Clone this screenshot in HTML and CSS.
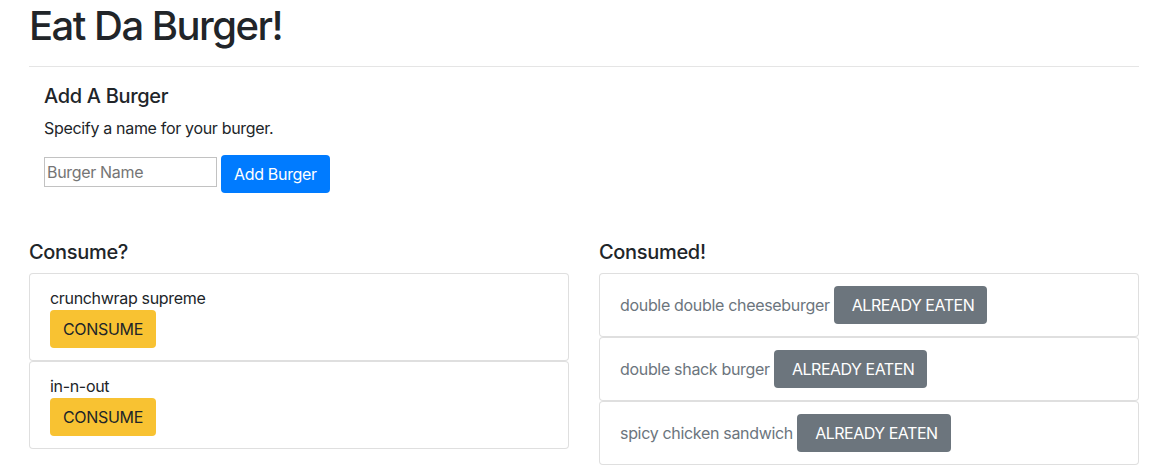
FILE: index.html
```html
<!DOCTYPE html>
<html lang="en">
<head>
<meta charset="utf-8">
<title>Eat Da Burger!</title>
<link rel="stylesheet" href="styles.css">
</head>
<body>
<div class="page">
  <h1 class="title">Eat Da Burger!</h1>
  <hr class="divider">
  <section class="add">
    <h2 class="add-title">Add A Burger</h2>
    <p class="add-text">Specify a name for your burger.</p>
    <form class="add-form">
      <input class="name-input" type="text" placeholder="Burger Name">
      <button class="btn btn-primary" type="button">Add Burger</button>
    </form>
  </section>
  <div class="columns">
    <div class="col">
      <h3 class="col-title">Consume?</h3>
      <div class="item item-stack">
        <div class="item-name">crunchwrap supreme</div>
        <button class="btn btn-warning" type="button">Consume</button>
      </div>
      <div class="item item-stack">
        <div class="item-name">in-n-out</div>
        <button class="btn btn-warning" type="button">Consume</button>
      </div>
    </div>
    <div class="col">
      <h3 class="col-title">Consumed!</h3>
      <div class="item item-inline">double double cheeseburger <button class="btn btn-secondary" type="button">Already eaten</button></div>
      <div class="item item-inline">double shack burger <button class="btn btn-secondary" type="button">Already eaten</button></div>
      <div class="item item-inline">spicy chicken sandwich <button class="btn btn-secondary" type="button">Already eaten</button></div>
    </div>
  </div>
</div>
</body>
</html>
```
FILE: styles.css
```css
* { box-sizing: border-box; }

body {
  margin: 0;
  font-family: "Inter", "Liberation Sans", sans-serif;
  font-size: 16px;
  line-height: 1.5;
  letter-spacing: -0.02em;
  color: #212529;
  background: #fff;
}

.page {
  width: 1110px;
  margin-left: 29px;
}

.title {
  margin: 0;
  padding-top: 2px;
  font-size: 40px;
  font-weight: 500;
  line-height: 48px;
  letter-spacing: -0.038em;
}

.divider {
  margin: 16px 0 17px;
  border: 0;
  border-top: 1px solid rgba(0, 0, 0, 0.1);
  height: 0;
}

.add {
  padding: 0 15px;
}

.add-title {
  margin: 0 0 8px;
  font-size: 20px;
  font-weight: 500;
  line-height: 24px;
}

.add-text {
  margin: 0 0 15px;
}

.add-form {
  display: flex;
  align-items: flex-start;
  gap: 4px;
  margin: 0;
}

.name-input {
  width: 173px;
  height: 30px;
  margin-top: 2px;
  padding: 1px 2px;
  border: 1px solid #c2c2c2;
  border-radius: 0;
  font-family: inherit;
  font-size: 16px;
  letter-spacing: -0.02em;
  color: #212529;
}

.name-input::placeholder {
  color: #757575;
}

.btn {
  display: inline-block;
  height: 38px;
  padding: 6px 12px;
  border: 1px solid transparent;
  border-radius: 4px;
  font-family: inherit;
  font-size: 16px;
  line-height: 24px;
  letter-spacing: -0.02em;
  cursor: pointer;
}

.btn-primary {
  background: #007bff;
  color: #fff;
}

.btn-warning {
  background: #f8c232;
  color: #212529;
  text-transform: uppercase;
}

.btn-secondary {
  background: #6c757d;
  color: #fff;
  text-transform: uppercase;
  letter-spacing: -0.03em;
  padding: 6px 12px 6px 17px;
}

.columns {
  display: grid;
  grid-template-columns: 1fr 1fr;
  gap: 30px;
  margin-top: 47px;
}

.col-title {
  margin: 0 0 9px;
  font-size: 20px;
  font-weight: 500;
  line-height: 24px;
}

.item {
  padding: 12px 20px;
  border: 1px solid rgba(0, 0, 0, 0.125);
  border-radius: 4px;
  background: #fff;
}

.item-name {
  line-height: 24px;
}

.item-inline {
  color: #6c757d;
}
```
